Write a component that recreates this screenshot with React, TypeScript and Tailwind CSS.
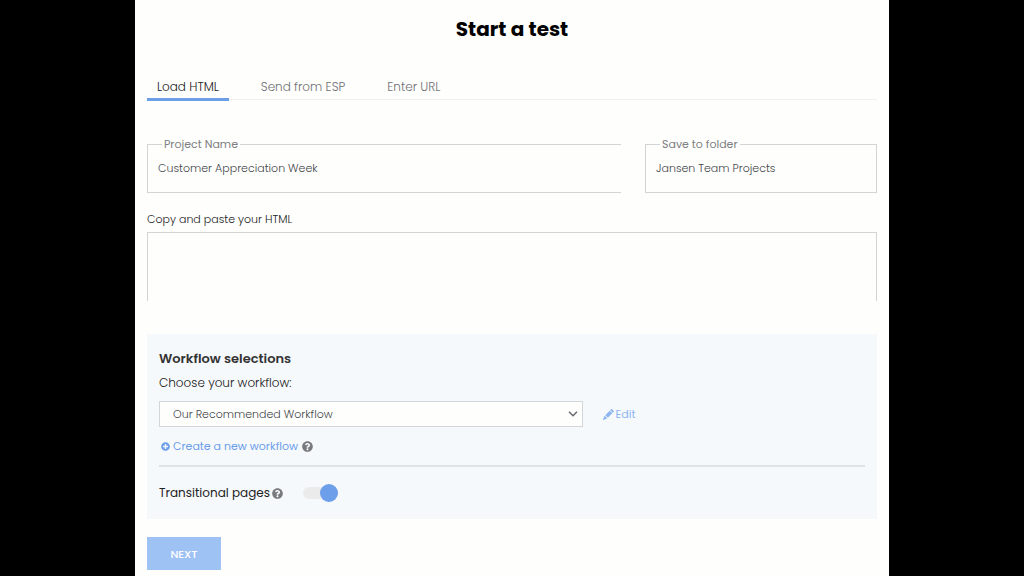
import { useState } from 'react'
import { BsPencilFill } from 'react-icons/bs'
import { FaPlusCircle, FaQuestionCircle } from 'react-icons/fa'
import { clsx } from 'clsx'

const tabs = ['Load HTML', 'Send from ESP', 'Enter URL']

export default function App() {
  const [activeTab, setActiveTab] = useState(tabs[0])
  const [project, setProject] = useState('Customer Appreciation Week')
  const [folder, setFolder] = useState('Jansen Team Projects')
  const [transitional, setTransitional] = useState(true)

  return (
    <div className="min-h-screen bg-black font-[Poppins,Inter,sans-serif] text-[11px]/4 text-[#3f4247]">
      <main className="mx-auto min-h-screen max-w-[754px] bg-[#fefefd] px-3 pt-[15px] pb-1">
        <h1 className="text-center text-xl/7 font-bold text-black">Start a test</h1>

        {/* Tabs */}
        <div role="tablist" className="mt-9 flex gap-[22px] border-b border-[#f0f0f0]">
          {tabs.map((tab) => {
            const isActive = tab === activeTab
            return (
              <button
                key={tab}
                role="tab"
                aria-selected={isActive}
                onClick={() => setActiveTab(tab)}
                className={clsx(
                  '-mb-0.5 border-b-3 px-2.5 pb-[3px] text-xs/4 font-light',
                  isActive ? 'border-[#6c9eea] text-[#222]' : 'border-transparent text-[#6f7174]',
                )}
              >
                {tab}
              </button>
            )
          })}
        </div>

        {/* Project + folder */}
        <div className="mt-9 flex gap-6">
          <fieldset className="min-w-0 flex-1 border border-r-0 border-[#d3d4d6] pb-2">
            <legend className="ml-3.5 px-0.5 text-[#7d7f82]">
              <label htmlFor="project">Project Name</label>
            </legend>
            <input
              id="project"
              value={project}
              onChange={(e) => setProject(e.target.value)}
              className="block h-8 w-full px-2.5 font-light text-[#44464a] outline-none"
            />
          </fieldset>
          <fieldset className="w-[232px] border border-[#d3d4d6] pb-2">
            <legend className="ml-3.5 px-0.5 text-[#7d7f82]">
              <label htmlFor="folder">Save to folder</label>
            </legend>
            <input
              id="folder"
              value={folder}
              onChange={(e) => setFolder(e.target.value)}
              className="block h-8 w-full px-2.5 font-light text-[#44464a] outline-none"
            />
          </fieldset>
        </div>

        <label htmlFor="html" className="mt-[18px] block font-light text-[#222]">
          Copy and paste your HTML
        </label>
        <textarea
          id="html"
          className="mt-[5px] block h-[69px] w-full resize-none border border-b-0 border-[#d3d4d6] p-2.5 outline-none"
        />

        {/* Workflow */}
        <section className="mt-[33px] bg-[#f6f9fc] px-3 pt-[15px] pb-4">
          <h2 className="text-[13px]/5 font-semibold text-[#333]">Workflow selections</h2>
          <label htmlFor="workflow" className="mt-1.5 block text-xs/4 font-light text-[#222]">
            Choose your workflow:
          </label>
          <div className="mt-2.5 flex items-center gap-5">
            <div className="relative w-3/5">
              <select
                id="workflow"
                className="block h-[26px] w-full appearance-none border border-[#d3d6d9] bg-[#fefefd] px-[13px] font-light text-[#44464a] outline-none"
              >
                <option>Our Recommended Workflow</option>
              </select>
              <svg
                viewBox="0 0 10 6"
                className="pointer-events-none absolute top-2.5 right-[5px] h-1.5 w-2.5"
                fill="none"
                stroke="#66686b"
                strokeWidth="1.5"
              >
                <path d="M1 .8 5 4.8 9 .8" />
              </svg>
            </div>
            <a href="#edit" className="flex items-center gap-0.5 text-[#8db5f0]">
              <BsPencilFill className="size-[11px]" />
              Edit
            </a>
          </div>
          <div className="mt-[11px] flex items-center gap-1">
            <a href="#new" className="flex items-center gap-[3px] pl-0.5 text-[#6c9eea]">
              <FaPlusCircle className="size-[9px]" />
              Create a new workflow
            </a>
            <FaQuestionCircle className="size-[11px] text-[#77797b]" />
          </div>
          <hr className="mt-[11px] border-t-2 border-[#e0e3e6]" />
          <div className="mt-4 flex h-5 items-center">
            <label htmlFor="transitional" className="text-xs/4 text-[#222]">
              Transitional pages
            </label>
            <FaQuestionCircle className="ml-0.5 size-[11px] text-[#77797b]" />
            <span className="relative ml-5 flex h-[18px] w-[35px] items-center">
              <input
                id="transitional"
                type="checkbox"
                role="switch"
                checked={transitional}
                onChange={(e) => setTransitional(e.target.checked)}
                className="peer h-3 w-full appearance-none rounded-full bg-[#ebebeb]"
              />
              <span className="pointer-events-none absolute left-0 size-[18px] rounded-full bg-[#b5b8bc] peer-checked:right-0 peer-checked:left-auto peer-checked:bg-[#6c9eea]" />
            </span>
          </div>
        </section>

        <button className="mt-[18px] h-[33px] w-[74px] bg-[#9fc2f5] font-medium text-white">
          NEXT
        </button>
      </main>
    </div>
  )
}
